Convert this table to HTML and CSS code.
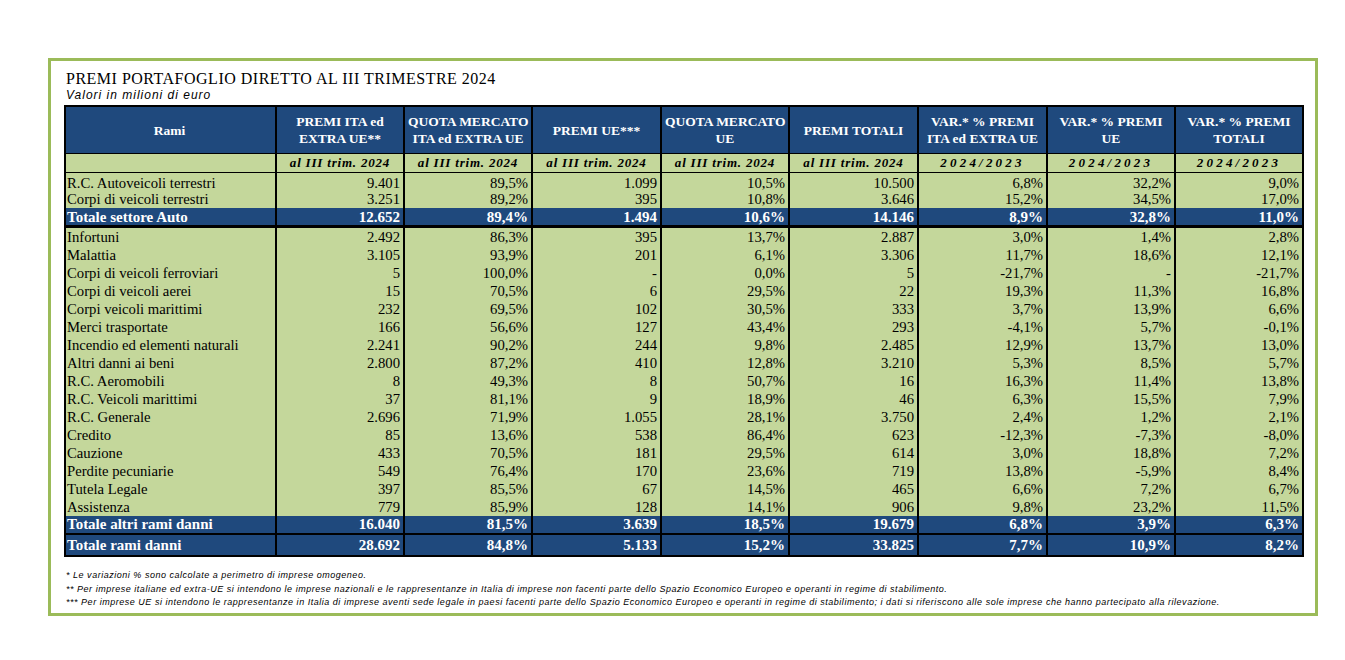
FILE: index.html
```html
<!DOCTYPE html>
<html lang="it">
<head>
<meta charset="utf-8">
<title>Premi portafoglio diretto al III trimestre 2024</title>
<link rel="stylesheet" href="styles.css">
</head>
<body>
<div class="frame">
  <div class="title">PREMI PORTAFOGLIO DIRETTO AL III TRIMESTRE 2024</div>
  <div class="subtitle">Valori in milioni di euro</div>
  <table class="grid">
    <colgroup>
      <col class="c-rami"><col class="c-a"><col class="c-a"><col class="c-b"><col class="c-a"><col class="c-b"><col class="c-b"><col class="c-a"><col class="c-a">
    </colgroup>
    <thead>
      <tr class="head">
        <th>Rami</th>
        <th>PREMI ITA ed<br>EXTRA UE**</th>
        <th>QUOTA MERCATO<br>ITA ed EXTRA UE</th>
        <th>PREMI UE***</th>
        <th>QUOTA MERCATO<br>UE</th>
        <th>PREMI TOTALI</th>
        <th>VAR.* % PREMI<br>ITA ed EXTRA UE</th>
        <th>VAR.* % PREMI<br>UE</th>
        <th>VAR.* % PREMI<br>TOTALI</th>
      </tr>
      <tr class="sub">
        <th></th>
        <th>al III trim. 2024</th>
        <th>al III trim. 2024</th>
        <th>al III trim. 2024</th>
        <th>al III trim. 2024</th>
        <th>al III trim. 2024</th>
        <th class="yr">2024/2023</th>
        <th class="yr">2024/2023</th>
        <th class="yr">2024/2023</th>
      </tr>
    </thead>
    <tbody>
      <tr class="row r-first"><td>R.C. Autoveicoli terrestri</td><td>9.401</td><td>89,5%</td><td>1.099</td><td>10,5%</td><td>10.500</td><td>6,8%</td><td>32,2%</td><td>9,0%</td></tr>
      <tr class="row r-second"><td>Corpi di veicoli terrestri</td><td>3.251</td><td>89,2%</td><td>395</td><td>10,8%</td><td>3.646</td><td>15,2%</td><td>34,5%</td><td>17,0%</td></tr>
      <tr class="total t-auto"><td>Totale settore Auto</td><td>12.652</td><td>89,4%</td><td>1.494</td><td>10,6%</td><td>14.146</td><td>8,9%</td><td>32,8%</td><td>11,0%</td></tr>
      <tr class="row"><td>Infortuni</td><td>2.492</td><td>86,3%</td><td>395</td><td>13,7%</td><td>2.887</td><td>3,0%</td><td>1,4%</td><td>2,8%</td></tr>
      <tr class="row"><td>Malattia</td><td>3.105</td><td>93,9%</td><td>201</td><td>6,1%</td><td>3.306</td><td>11,7%</td><td>18,6%</td><td>12,1%</td></tr>
      <tr class="row"><td>Corpi di veicoli ferroviari</td><td>5</td><td>100,0%</td><td>-</td><td>0,0%</td><td>5</td><td>-21,7%</td><td>-</td><td>-21,7%</td></tr>
      <tr class="row"><td>Corpi di veicoli aerei</td><td>15</td><td>70,5%</td><td>6</td><td>29,5%</td><td>22</td><td>19,3%</td><td>11,3%</td><td>16,8%</td></tr>
      <tr class="row"><td>Corpi veicoli marittimi</td><td>232</td><td>69,5%</td><td>102</td><td>30,5%</td><td>333</td><td>3,7%</td><td>13,9%</td><td>6,6%</td></tr>
      <tr class="row"><td>Merci trasportate</td><td>166</td><td>56,6%</td><td>127</td><td>43,4%</td><td>293</td><td>-4,1%</td><td>5,7%</td><td>-0,1%</td></tr>
      <tr class="row"><td>Incendio ed elementi naturali</td><td>2.241</td><td>90,2%</td><td>244</td><td>9,8%</td><td>2.485</td><td>12,9%</td><td>13,7%</td><td>13,0%</td></tr>
      <tr class="row"><td>Altri danni ai beni</td><td>2.800</td><td>87,2%</td><td>410</td><td>12,8%</td><td>3.210</td><td>5,3%</td><td>8,5%</td><td>5,7%</td></tr>
      <tr class="row"><td>R.C. Aeromobili</td><td>8</td><td>49,3%</td><td>8</td><td>50,7%</td><td>16</td><td>16,3%</td><td>11,4%</td><td>13,8%</td></tr>
      <tr class="row"><td>R.C. Veicoli marittimi</td><td>37</td><td>81,1%</td><td>9</td><td>18,9%</td><td>46</td><td>6,3%</td><td>15,5%</td><td>7,9%</td></tr>
      <tr class="row"><td>R.C. Generale</td><td>2.696</td><td>71,9%</td><td>1.055</td><td>28,1%</td><td>3.750</td><td>2,4%</td><td>1,2%</td><td>2,1%</td></tr>
      <tr class="row"><td>Credito</td><td>85</td><td>13,6%</td><td>538</td><td>86,4%</td><td>623</td><td>-12,3%</td><td>-7,3%</td><td>-8,0%</td></tr>
      <tr class="row"><td>Cauzione</td><td>433</td><td>70,5%</td><td>181</td><td>29,5%</td><td>614</td><td>3,0%</td><td>18,8%</td><td>7,2%</td></tr>
      <tr class="row"><td>Perdite pecuniarie</td><td>549</td><td>76,4%</td><td>170</td><td>23,6%</td><td>719</td><td>13,8%</td><td>-5,9%</td><td>8,4%</td></tr>
      <tr class="row"><td>Tutela Legale</td><td>397</td><td>85,5%</td><td>67</td><td>14,5%</td><td>465</td><td>6,6%</td><td>7,2%</td><td>6,7%</td></tr>
      <tr class="row"><td>Assistenza</td><td>779</td><td>85,9%</td><td>128</td><td>14,1%</td><td>906</td><td>9,8%</td><td>23,2%</td><td>11,5%</td></tr>
      <tr class="total t-altri"><td>Totale altri rami danni</td><td>16.040</td><td>81,5%</td><td>3.639</td><td>18,5%</td><td>19.679</td><td>6,8%</td><td>3,9%</td><td>6,3%</td></tr>
      <tr class="total t-rami"><td>Totale rami danni</td><td>28.692</td><td>84,8%</td><td>5.133</td><td>15,2%</td><td>33.825</td><td>7,7%</td><td>10,9%</td><td>8,2%</td></tr>
    </tbody>
  </table>
  <div class="notes">
    <p>* Le variazioni % sono calcolate a perimetro di imprese omogeneo.</p>
    <p>** Per imprese italiane ed extra-UE si intendono le imprese nazionali e le rappresentanze in Italia di imprese non facenti parte dello Spazio Economico Europeo e operanti in regime di stabilimento.</p>
    <p>*** Per imprese UE si intendono le rappresentanze in Italia di imprese aventi sede legale in paesi facenti parte dello Spazio Economico Europeo e operanti in regime di stabilimento; i dati si riferiscono alle sole imprese che hanno partecipato alla rilevazione.</p>
  </div>
</div>
</body>
</html>
```
FILE: styles.css
```css
html, body {
  margin: 0;
  padding: 0;
  background: #ffffff;
}

body {
  font-family: "Liberation Serif", "Times New Roman", serif;
  color: #000;
}

.frame {
  box-sizing: border-box;
  margin: 58px 0 0 48px;
  width: 1270px;
  height: 558px;
  border: 3px solid #9bbb59;
  padding: 8px 11px 0 13px;
}

.title {
  font-size: 16px;
  line-height: 19px;
  letter-spacing: 0.5px;
  margin-left: 2px;
}

.subtitle {
  font-family: "Liberation Sans", Arial, sans-serif;
  font-style: italic;
  font-size: 12px;
  line-height: 14px;
  letter-spacing: 1px;
  margin-left: 2px;
  margin-bottom: 3px;
}

.grid {
  width: 1240px;
  table-layout: fixed;
  border-collapse: separate;
  border-spacing: 0;
}

.c-rami { width: 213px; }
.c-a { width: 128px; }
.c-b { width: 129px; }

.grid th,
.grid td {
  padding: 0 3px;
  border-right: 2px solid #000;
  white-space: nowrap;
  overflow: hidden;
}

.grid th:first-child,
.grid td:first-child {
  border-left: 2px solid #000;
  padding-left: 1px;
  text-align: left;
}

.head th {
  background: #1f497d;
  color: #fff;
  font-weight: bold;
  font-size: 13.5px;
  line-height: 17px;
  padding-top: 6px;
  padding-bottom: 6px;
  text-align: center;
  vertical-align: middle;
  border-top: 2px solid #000;
  border-bottom: 1px solid #000;
}

.head th:first-child {
  text-align: center;
}

.sub th {
  background: #c4d79b;
  font-weight: bold;
  font-style: italic;
  font-size: 13px;
  line-height: 18px;
  letter-spacing: 0.8px;
  text-align: center;
  border-bottom: 1px solid #000;
}

.sub th.yr {
  letter-spacing: 3.2px;
}

.row td {
  background: #c4d79b;
  font-size: 14.7px;
  line-height: 18px;
  text-align: right;
}

.r-first td {
  padding-top: 3px;
  line-height: 15px;
}

.r-second td {
  line-height: 17px;
}

.total td {
  background: #1f497d;
  color: #fff;
  font-weight: bold;
  font-size: 15px;
  line-height: 17px;
  text-align: right;
}

.t-auto td {
  padding-top: 2px;
  line-height: 15px;
  border-bottom: 3px solid #000;
}

.t-altri td {
  border-bottom: 2px solid #000;
}

.t-rami td {
  padding-top: 2px;
  padding-bottom: 1px;
  line-height: 17px;
  border-bottom: 2px solid #000;
}

.notes {
  margin-top: 12px;
  margin-left: 2px;
  font-family: "Liberation Sans", Arial, sans-serif;
  font-style: italic;
  font-size: 9px;
  line-height: 13.5px;
  letter-spacing: 0.52px;
  white-space: nowrap;
}

.notes p {
  margin: 0;
}
```
